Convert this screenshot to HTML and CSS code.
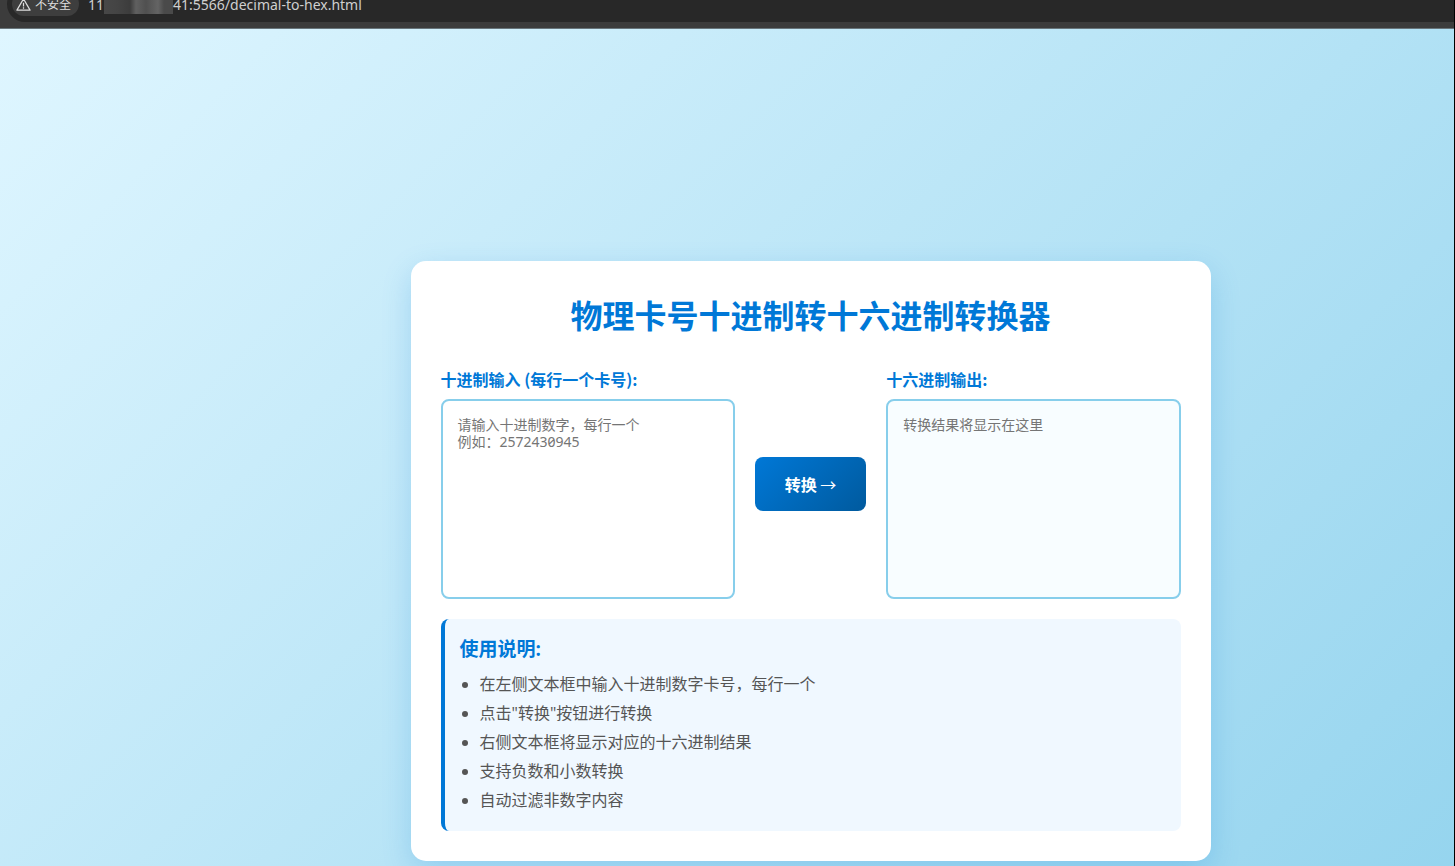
FILE: index.html
```html
<!DOCTYPE html>
<html lang="zh-CN">
<head>
<meta charset="UTF-8">
<title>物理卡号十进制转十六进制转换器</title>
<link rel="stylesheet" href="styles.css">
</head>
<body>
<header class="toolbar">
  <div class="address-bar">
    <button class="security" type="button">
      <svg class="warning-icon" viewBox="0 0 16 16" aria-hidden="true">
        <path d="M8 2 L15 14 H1 Z" fill="none" stroke="currentColor" stroke-width="1.3" stroke-linejoin="round"/>
        <path d="M8 6 V10 M8 11 V12.6" fill="none" stroke="currentColor" stroke-width="1.3"/>
      </svg>
      不安全
    </button>
    <div class="url"><span>11</span><span class="mosaic"></span><span>41:5566/decimal-to-hex.html</span></div>
  </div>
</header>
<main class="page">
  <section class="card">
    <h1 class="title">物理卡号十进制转十六进制转换器</h1>
    <div class="converter">
      <div class="field">
        <label for="decimal">十进制输入 (每行一个卡号):</label>
        <textarea id="decimal" placeholder="请输入十进制数字，每行一个
例如：2572430945"></textarea>
      </div>
      <button class="convert" type="button">转换 <span class="arrow">→</span></button>
      <div class="field">
        <label for="hex">十六进制输出:</label>
        <textarea id="hex" class="output" readonly placeholder="转换结果将显示在这里"></textarea>
      </div>
    </div>
    <div class="instructions">
      <h2>使用说明:</h2>
      <ul>
        <li>在左侧文本框中输入十进制数字卡号，每行一个</li>
        <li>点击"转换"按钮进行转换</li>
        <li>右侧文本框将显示对应的十六进制结果</li>
        <li>支持负数和小数转换</li>
        <li>自动过滤非数字内容</li>
      </ul>
    </div>
  </section>
</main>
</body>
</html>
```
FILE: styles.css
```css
* {
  box-sizing: border-box;
  margin: 0;
  padding: 0;
}

body {
  display: flex;
  flex-direction: column;
  min-height: 100vh;
  border-right: 1px solid #000;
  font-family: "Open Sans", "Noto Sans CJK SC", sans-serif;
  font-size: 16px;
}

.toolbar {
  display: flex;
  align-items: flex-end;
  height: 29px;
  padding: 0 0 6px 7px;
  overflow: hidden;
  background: #3c3c3c;
  border-bottom: 1px solid #68757b;
}

.address-bar {
  display: flex;
  flex: 1;
  align-items: center;
  flex-shrink: 0;
  gap: 9px;
  height: 36px;
  padding-left: 5px;
  border-radius: 18px 0 0 18px;
  background: #282828;
}

.security {
  display: flex;
  align-items: center;
  gap: 4px;
  height: 24px;
  padding: 0 8px 0 4px;
  border: 0;
  border-radius: 12px;
  background: #3e3e3e;
  color: #dedede;
  font-family: inherit;
  font-size: 12px;
}

.warning-icon {
  width: 15px;
  height: 15px;
}

.url {
  display: flex;
  align-items: center;
  color: #cfcfcf;
  font-family: "Noto Sans", sans-serif;
  font-size: 14px;
}

.mosaic {
  width: 69px;
  height: 20px;
  background: linear-gradient(90deg, #484848, #444 14px, #3c3c3c 26px, #606060 32px, #505050 42px, #646464 54px, #4a4a4a 60px);
}

.page {
  display: flex;
  flex: 1;
  align-items: flex-start;
  justify-content: center;
  padding: 232px 0 5px 167px;
  background: linear-gradient(135deg, #dff6ff 0%, #87ceeb 120%);
}

.card {
  width: 100%;
  max-width: 800px;
  padding: 30px;
  border-radius: 15px;
  background: #fff;
  box-shadow: 0 10px 30px rgba(0, 120, 215, 0.2);
}

.title {
  margin-bottom: 28px;
  color: #0078d7;
  font-size: 32px;
  line-height: 49px;
  text-align: center;
}

.converter {
  display: flex;
  align-items: center;
  gap: 20px;
}

.field {
  display: flex;
  flex: 1;
  flex-direction: column;
  gap: 8px;
}

.field label {
  color: #0078d7;
  font-family: "Noto Sans CJK SC", sans-serif;
  font-weight: bold;
  line-height: 23px;
}

.field textarea {
  width: 100%;
  height: 200px;
  padding: 15px;
  border: 2px solid #87ceeb;
  border-radius: 8px;
  outline: 0;
  background: #fff;
  font-family: "Noto Sans", "Noto Sans CJK SC", monospace;
  font-size: 14px;
  font-variant-numeric: slashed-zero;
  line-height: 17px;
  resize: none;
}

.field textarea::placeholder {
  color: #757575;
}

.field .output {
  background: #f8fdff;
}

.convert {
  padding: 15px 30px;
  border: 0;
  border-radius: 8px;
  background: linear-gradient(135deg, #0078d7, #005a9e);
  color: #fff;
  font-family: "Noto Sans CJK SC", sans-serif;
  font-size: 16px;
  font-weight: bold;
  line-height: 24px;
}

.arrow {
  font-weight: 400;
}

.instructions {
  margin-top: 20px;
  padding: 15px 15px 14px;
  border-left: 4px solid #0078d7;
  border-radius: 8px;
  background: #f0f8ff;
}

.instructions h2 {
  margin-bottom: 7px;
  color: #0078d7;
  font-size: 19px;
  line-height: 31px;
}

.instructions ul {
  padding-left: 20px;
  color: #555;
}

.instructions li {
  margin-bottom: 5px;
  line-height: 24px;
}
```
